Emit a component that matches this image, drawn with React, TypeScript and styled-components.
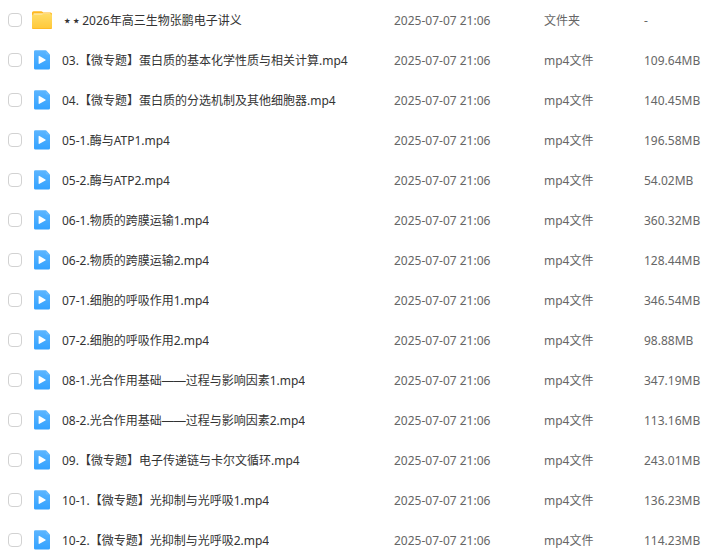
import React from "react";
import styled, { createGlobalStyle } from "styled-components";

const GlobalStyle = createGlobalStyle`
  body {
    margin: 0;
    background: #fff;
    font-family: "Noto Sans", "Noto Sans CJK SC", sans-serif;
    font-size: 12px;
    line-height: 20px;
    color: #333;
  }
`;

const FileTable = styled.table`
  width: 100%;
  table-layout: fixed;
  border-collapse: collapse;
`;

const CheckCol = styled.col`
  width: 32px;
`;

const DateCol = styled.col`
  width: 150px;
`;

const KindCol = styled.col`
  width: 100px;
`;

const SizeCol = styled.col`
  width: 67px;
`;

const Row = styled.tr`
  height: 40px;
`;

const Cell = styled.td`
  padding: 0;
  white-space: nowrap;
  vertical-align: middle;
`;

const CheckCell = styled(Cell)`
  padding-left: 8px;
`;

const InfoCell = styled(Cell)`
  padding-top: 2px;
  color: #666;
`;

const Checkbox = styled.input`
  appearance: none;
  display: block;
  width: 14px;
  height: 14px;
  margin: 0;
  box-sizing: border-box;
  border: 1px solid #d2d2d2;
  border-radius: 4px;
  background: #fff;

  &:checked {
    border-color: #3a9fff;
    background: #3a9fff;
  }
`;

const NameLabel = styled.label<{ $folder: boolean }>`
  display: flex;
  align-items: center;
  gap: ${(p) => (p.$folder ? 12 : 10)}px;
  color: #333;
`;

const Icon = styled.svg`
  flex: none;
  display: block;
  width: 20px;
  height: 20px;
`;

const Name = styled.span`
  overflow: hidden;
  padding-top: 2px;
  text-overflow: ellipsis;
`;

const Dash = styled.span`
  font-family: "Liberation Sans", sans-serif;
  line-height: 1;
`;

type FileEntry = { name: string; size: string; folder?: boolean };

const files: FileEntry[] = [
  { name: "\u2b51\u00a0\u2b51\u00a02026年高三生物张鹏电子讲义", size: "-", folder: true },
  { name: "03.【微专题】蛋白质的基本化学性质与相关计算.mp4", size: "109.64MB" },
  { name: "04.【微专题】蛋白质的分选机制及其他细胞器.mp4", size: "140.45MB" },
  { name: "05-1.酶与ATP1.mp4", size: "196.58MB" },
  { name: "05-2.酶与ATP2.mp4", size: "54.02MB" },
  { name: "06-1.物质的跨膜运输1.mp4", size: "360.32MB" },
  { name: "06-2.物质的跨膜运输2.mp4", size: "128.44MB" },
  { name: "07-1.细胞的呼吸作用1.mp4", size: "346.54MB" },
  { name: "07-2.细胞的呼吸作用2.mp4", size: "98.88MB" },
  { name: "08-1.光合作用基础——过程与影响因素1.mp4", size: "347.19MB" },
  { name: "08-2.光合作用基础——过程与影响因素2.mp4", size: "113.16MB" },
  { name: "09.【微专题】电子传递链与卡尔文循环.mp4", size: "243.01MB" },
  { name: "10-1.【微专题】光抑制与光呼吸1.mp4", size: "136.23MB" },
  { name: "10-2.【微专题】光抑制与光呼吸2.mp4", size: "114.23MB" },
];

function FolderIcon() {
  return (
    <Icon viewBox="0 0 20 20" aria-hidden="true">
      <defs>
        <linearGradient id="folder" x1="0" y1="0" x2="0" y2="1">
          <stop offset="0" stopColor="#ffdc66" />
          <stop offset="1" stopColor="#ffc838" />
        </linearGradient>
      </defs>
      <path d="M0 2.800Q0 1.300 1.500 1.300H9.400q.6 0 1 .4l.8.8h7.300Q20 2.500 20 4v7H0z" fill="#ffb81f" />
      <path d="M1.600 3.400h16.800v3H1.600z" fill="#fff0c4" />
      <path d="M0 6Q0 4.600 1.400 4.600h8.200l1.600-.6h7.400Q20 4 20 5.400v12Q20 19 18.400 19H1.600Q0 19 0 17.400z" fill="url(#folder)" />
      <path d="M0 16.800Q0 18.300 1.600 18.300h16.800Q20 18.300 20 16.800v.6Q20 19 18.400 19H1.600Q0 19 0 17.400z" fill="#ffb51e" />
    </Icon>
  );
}

function VideoIcon() {
  return (
    <Icon viewBox="0 0 20 20" aria-hidden="true">
      <defs>
        <linearGradient id="video" x1="0" y1="0" x2="0" y2="1">
          <stop offset="0" stopColor="#5bb5ff" />
          <stop offset="1" stopColor="#34a2ff" />
        </linearGradient>
      </defs>
      <path d="M3.400 .2h9.800q.6 0 1 .4l3.400 3.600q.4.400.4 1v13q0 1.400-1.400 1.400H3.400Q2 19.600 2 18.200V1.600Q2 .2 3.400 .2z" fill="url(#video)" />
      <path d="M13.800 .4l4 4h-2.800q-1.200 0-1.200-1.200z" fill="#69bbff" />
      <path d="M6.600 6.500q0-1 .9-.5l5.900 3.400q.8.500 0 1l-5.900 3.400q-.9.500-.9-.5z" fill="#fff" />
    </Icon>
  );
}

function FileName({ text }: { text: string }) {
  return (
    <Name>
      {text.split(/(——)/).map((part, i) => (part === "——" ? <Dash key={i}>{part}</Dash> : part))}
    </Name>
  );
}

export default function App() {
  return (
    <>
      <GlobalStyle />
      <FileTable>
        <colgroup>
          <CheckCol />
          <col />
          <DateCol />
          <KindCol />
          <SizeCol />
        </colgroup>
        <tbody>
          {files.map((file, i) => (
            <Row key={file.name}>
              <CheckCell>
                <Checkbox type="checkbox" id={`file-${i}`} />
              </CheckCell>
              <Cell>
                <NameLabel htmlFor={`file-${i}`} $folder={!!file.folder}>
                  {file.folder ? <FolderIcon /> : <VideoIcon />}
                  <FileName text={file.name} />
                </NameLabel>
              </Cell>
              <InfoCell>2025-07-07 21:06</InfoCell>
              <InfoCell>{file.folder ? "文件夹" : "mp4文件"}</InfoCell>
              <InfoCell>{file.size}</InfoCell>
            </Row>
          ))}
        </tbody>
      </FileTable>
    </>
  );
}
